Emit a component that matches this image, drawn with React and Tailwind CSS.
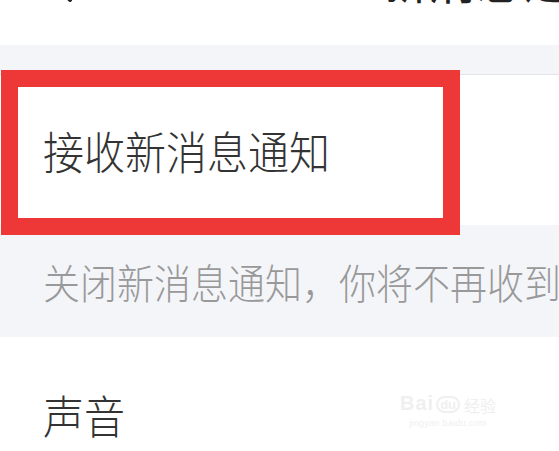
export default function App() {
  const font = { fontFamily: '"Noto Sans CJK SC", "Noto Sans", sans-serif' };
  return (
    <div className="relative w-[559px] h-[451px] overflow-hidden bg-white" style={font}>
      {/* header, mostly scrolled out of view */}
      <div className="relative h-[45px] bg-white overflow-hidden">
        <svg className="absolute left-[44px] top-[-46px]" width="30" height="50" viewBox="0 0 30 50" fill="none">
          <path d="M26 3 L6 24 L26 46" stroke="#222" strokeWidth="4" strokeLinecap="round" strokeLinejoin="round" />
        </svg>
        <div className="absolute left-[380px] top-[-46px] text-[48px] leading-[48px] text-[#222] whitespace-nowrap">新消息通知</div>
      </div>

      <div className="h-[30px] bg-[#f4f5f9] border-b border-[#e3e4e9]" />

      <div className="h-[150px] bg-white flex items-center pl-[43px]">
        <span className="inline-block scale-y-[1.1] text-[41px] leading-none font-light text-[#333]">接收新消息通知</span>
      </div>

      <div className="h-[112px] bg-[#f4f5f9] flex items-center pl-[43px] overflow-hidden">
        <span className="inline-block scale-y-[1.1] text-[37px] leading-none font-light text-[#999] whitespace-nowrap">关闭新消息通知，你将不再收到新消息提醒</span>
      </div>

      <div className="h-[150px] bg-white flex items-center pl-[43px] pt-[4px]">
        <span className="inline-block scale-y-[1.1] text-[41px] leading-none font-light text-[#333]">声音</span>
      </div>

      {/* red annotation box */}
      <div className="absolute left-[1px] top-[70px] w-[459px] h-[165px] border-[17px] border-[#ee3838]" />

      {/* watermark */}
      <div className="absolute left-[400px] top-[393px] flex flex-col items-center text-[#efefef]" style={{ fontFamily: '"Liberation Sans", sans-serif' }}>
        <div className="flex items-end gap-[2px] leading-none">
          <span className="text-[20px] font-bold tracking-[1px]">Bai</span>
          <span className="relative text-[13px] font-bold border-2 border-[#efefef] rounded-full px-[2px]">du</span>
          <span className="text-[16px] ml-[2px]" style={font}>经验</span>
        </div>
        <div className="text-[9px] mt-[4px] tracking-[0.3px]">jingyan.baidu.com</div>
      </div>
    </div>
  );
}
